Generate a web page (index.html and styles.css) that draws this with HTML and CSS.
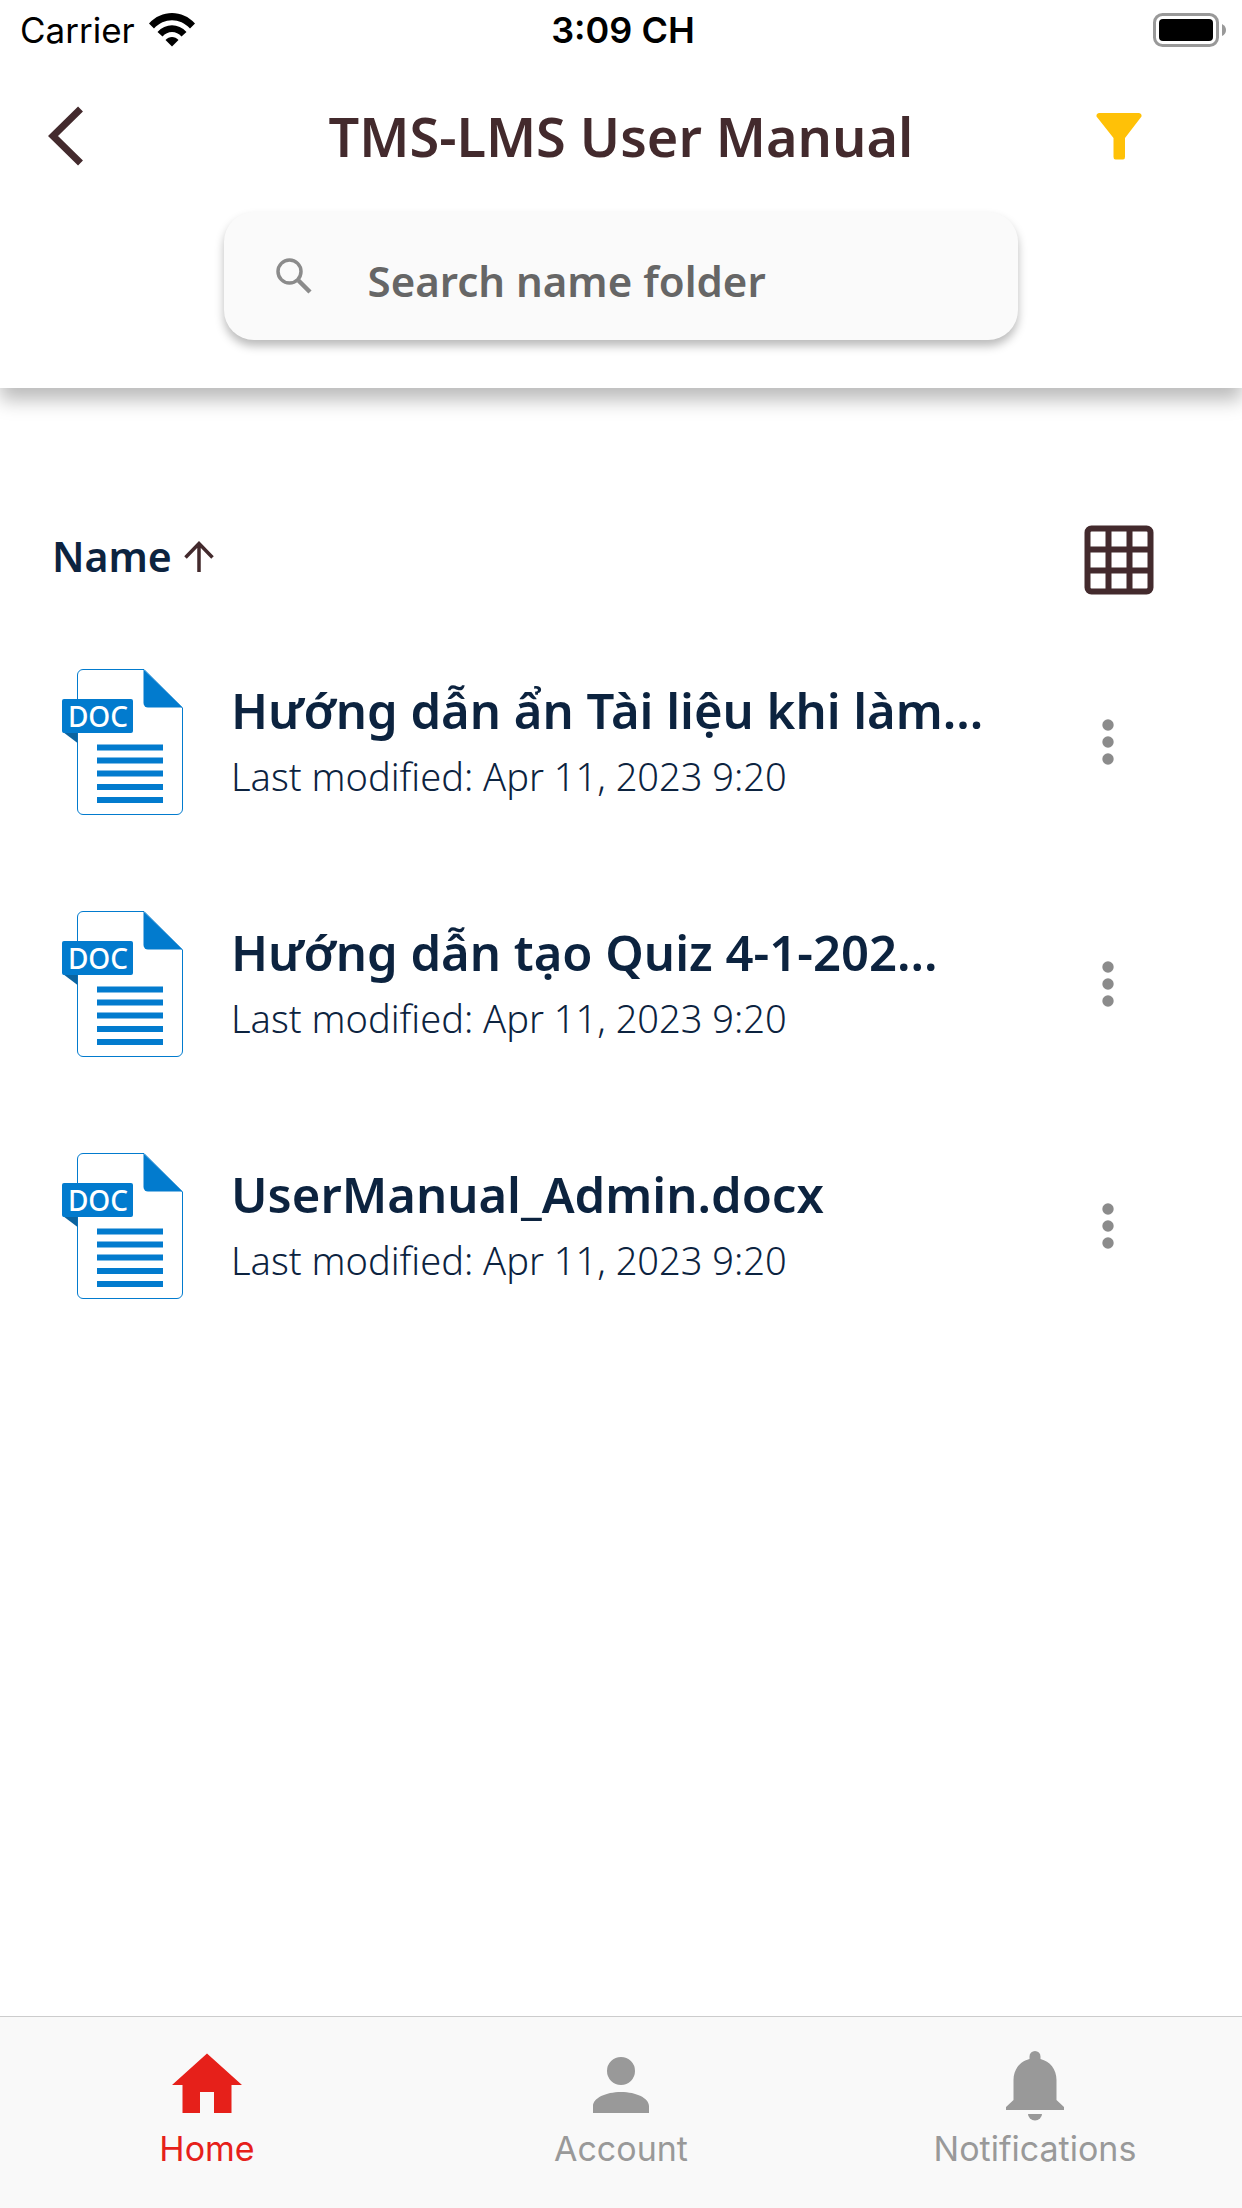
FILE: index.html
```html
<!DOCTYPE html>
<html lang="vi">
  <head>
    <meta charset="UTF-8" />
    <meta name="viewport" content="width=device-width, initial-scale=1.0" />
    <title>TMS-LMS User Manual</title>
    <link rel="stylesheet" href="styles.css">
  </head>
  <body>
    <div class="screen">
      <header class="header">
        <div class="status-bar">
          <div class="carrier">
            <span>Carrier</span>
            <svg width="46" height="34" viewBox="0 0 46 34">
              <path d="M0 10.500C12.500-3.500 33.500-3.500 46 10.500L41 15.500C31 4.500 15 4.500 5 15.500Z" />
              <path d="M8.500 19C16.500 10 29.500 10 37.500 19L32.500 23.500C27.500 17.500 18.500 17.500 13.500 23.500Z" />
              <path d="M16.500 27C20 23 26 23 29.500 27L23 33.500Z" />
            </svg>
          </div>
          <span class="time">3:09 CH</span>
          <svg class="battery" width="73" height="34" viewBox="0 0 73 34">
            <rect x="1.500" y="1.500" width="63" height="31" rx="8" fill="none" stroke="#999" stroke-width="3" />
            <rect x="6" y="6" width="54" height="22" rx="4" />
            <path d="M69 11q4 2 4 6t-4 6Z" fill="#999" />
          </svg>
        </div>

        <div class="title-bar">
          <button class="back" aria-label="Back">
            <svg width="36" height="60" viewBox="0 0 36 60">
              <path d="M32.500 3 5 30 32.500 57" fill="none" stroke="#432a2d" stroke-width="7" />
            </svg>
          </button>
          <h1>TMS-LMS User Manual</h1>
          <button class="filter" aria-label="Filter">
            <svg width="46" height="47" viewBox="0 0 46 47">
              <path d="M3 0H43q3 .500 2.500 3.500L29 25V44q0 2.500-2 2.500H19.500q-2 0-2-2.500V25L.500 3.500Q0 .500 3 0Z" fill="#ffc107" />
            </svg>
          </button>
        </div>

        <label class="search">
          <svg width="36" height="36" viewBox="0 0 36 36" fill="none" stroke="#8b8b8b">
            <circle cx="13.500" cy="13.500" r="11.500" stroke-width="3.500" />
            <path d="M22.500 22.500 34 34" stroke-width="4.500" />
          </svg>
          <input type="text" placeholder="Search name folder" aria-label="Search name folder" />
        </label>
      </header>

      <main class="content">
        <div class="toolbar">
          <button class="sort">
            Name
            <svg width="30" height="31" viewBox="0 0 30 31">
              <path d="M15 31V3M1.500 16.500 15 2.500 28.500 16.500" fill="none" stroke="#432a2d" stroke-width="3.500" />
            </svg>
          </button>
          <button aria-label="Grid view">
            <svg width="70" height="70" viewBox="0 0 70 70" fill="none" stroke="#432a2d" stroke-width="6">
              <rect x="3.500" y="3.500" width="63" height="63" rx="4" />
              <path d="M24.500 3V67M45.500 3V67M3 24.500H67M3 45.500H67" />
            </svg>
          </button>
        </div>

        <ul class="files">
          <li class="file">
            <svg class="file-icon" viewBox="0 0 124 148">
              <path d="M22 1.500H83L121.500 40V141a5.500 5.500 0 0 1-5.500 5.500H22a5.500 5.500 0 0 1-5.500-5.500V7A5.500 5.500 0 0 1 22 1.500Z" fill="#fff" stroke="#027bce" />
              <path d="M82.500 1.500 121.500 39.500H87a4.500 4.500 0 0 1-4.500-4.500Z" fill="#027bce" />
              <path d="M2 64 16.500 75V64Z" fill="#0b639f" />
              <rect x="1" y="31" width="71" height="34" rx="2" fill="#027bce" />
              <text x="37" y="59" text-anchor="middle" class="doc-text">DOC</text>
              <path d="M36 79.500h66M36 92.500h66M36 105.500h66M36 119h66M36 132h66" stroke="#027bce" stroke-width="6" />
            </svg>
            <div class="file-info">
              <h2>Hướng dẫn ẩn Tài liệu khi làm...</h2>
              <p>Last modified: Apr 11, 2023 9:20</p>
            </div>
            <button class="more" aria-label="More">
              <svg viewBox="0 0 12 48">
                <circle cx="6" cy="7" r="5.700" />
                <circle cx="6" cy="24" r="5.700" />
                <circle cx="6" cy="41" r="5.700" />
              </svg>
            </button>
          </li>
          <li class="file">
            <svg class="file-icon" viewBox="0 0 124 148">
              <path d="M22 1.500H83L121.500 40V141a5.500 5.500 0 0 1-5.500 5.500H22a5.500 5.500 0 0 1-5.500-5.500V7A5.500 5.500 0 0 1 22 1.500Z" fill="#fff" stroke="#027bce" />
              <path d="M82.500 1.500 121.500 39.500H87a4.500 4.500 0 0 1-4.500-4.500Z" fill="#027bce" />
              <path d="M2 64 16.500 75V64Z" fill="#0b639f" />
              <rect x="1" y="31" width="71" height="34" rx="2" fill="#027bce" />
              <text x="37" y="59" text-anchor="middle" class="doc-text">DOC</text>
              <path d="M36 79.500h66M36 92.500h66M36 105.500h66M36 119h66M36 132h66" stroke="#027bce" stroke-width="6" />
            </svg>
            <div class="file-info">
              <h2>Hướng dẫn tạo Quiz 4-1-202...</h2>
              <p>Last modified: Apr 11, 2023 9:20</p>
            </div>
            <button class="more" aria-label="More">
              <svg viewBox="0 0 12 48">
                <circle cx="6" cy="7" r="5.700" />
                <circle cx="6" cy="24" r="5.700" />
                <circle cx="6" cy="41" r="5.700" />
              </svg>
            </button>
          </li>
          <li class="file">
            <svg class="file-icon" viewBox="0 0 124 148">
              <path d="M22 1.500H83L121.500 40V141a5.500 5.500 0 0 1-5.500 5.500H22a5.500 5.500 0 0 1-5.500-5.500V7A5.500 5.500 0 0 1 22 1.500Z" fill="#fff" stroke="#027bce" />
              <path d="M82.500 1.500 121.500 39.500H87a4.500 4.500 0 0 1-4.500-4.500Z" fill="#027bce" />
              <path d="M2 64 16.500 75V64Z" fill="#0b639f" />
              <rect x="1" y="31" width="71" height="34" rx="2" fill="#027bce" />
              <text x="37" y="59" text-anchor="middle" class="doc-text">DOC</text>
              <path d="M36 79.500h66M36 92.500h66M36 105.500h66M36 119h66M36 132h66" stroke="#027bce" stroke-width="6" />
            </svg>
            <div class="file-info">
              <h2>UserManual_Admin.docx</h2>
              <p>Last modified: Apr 11, 2023 9:20</p>
            </div>
            <button class="more" aria-label="More">
              <svg viewBox="0 0 12 48">
                <circle cx="6" cy="7" r="5.700" />
                <circle cx="6" cy="24" r="5.700" />
                <circle cx="6" cy="41" r="5.700" />
              </svg>
            </button>
          </li>
        </ul>
      </main>

      <nav class="tabs">
        <a href="#home" class="tab active">
          <svg viewBox="0 0 24 24"><path d="M10 20V14H14V20H19V12H22L12 3 2 12H5V20Z" /></svg>
          Home
        </a>
        <a href="#account" class="tab">
          <svg viewBox="0 0 24 24"><path d="M12 4a4 4 0 1 1 0 8 4 4 0 0 1 0-8M12 14c4.420 0 8 1.790 8 4v2H4v-2c0-2.210 3.580-4 8-4" /></svg>
          Account
        </a>
        <a href="#notifications" class="tab">
          <svg viewBox="0 0 84 84">
            <path d="M36.500 16V13.500a5.500 5.500 0 0 1 11 0V16C57 18.500 63.500 26 63.500 37V57L71 64V67H13V64L20.500 57V37C20.500 26 27 18.500 36.500 16Z" />
            <path d="M35 71H49a7 6.500 0 0 1-14 0Z" />
          </svg>
          Notifications
        </a>
      </nav>
    </div>
  </body>
</html>
```
FILE: styles.css
```css
* {
  box-sizing: border-box;
}

body {
  margin: 0;
  background: #fff;
  color: #0c233f;
  font-family: "Noto Sans", "Open Sans", sans-serif;
}

h1,
h2,
p,
ul {
  margin: 0;
  padding: 0;
}

button {
  display: flex;
  align-items: center;
  padding: 0;
  border: none;
  background: none;
  font: inherit;
  color: inherit;
  cursor: pointer;
}

svg {
  display: block;
  flex: none;
}

.screen {
  display: flex;
  flex-direction: column;
  min-height: 100vh;
}

.header {
  padding-bottom: 48px;
  background: #fff;
  box-shadow: 0 12px 18px rgba(0, 0, 0, 0.27);
}

.status-bar {
  display: grid;
  grid-template-columns: 1fr auto 1fr;
  align-items: center;
  height: 60px;
  padding: 0 16px 0 20px;
  color: #000;
  font-family: Inter, sans-serif;
  font-size: 35px;
}

.carrier {
  display: flex;
  align-items: center;
  gap: 14px;
}

.time {
  font-size: 36px;
  font-weight: 600;
}

.battery {
  justify-self: end;
}

.title-bar {
  display: grid;
  grid-template-columns: 1fr auto 1fr;
  align-items: center;
  height: 152px;
  padding: 0 48px;
  color: #432a2d;
}

.title-bar h1 {
  font-size: 54px;
  font-weight: 600;
}

.filter {
  justify-self: end;
  margin-right: 52px;
}

.search {
  display: flex;
  align-items: center;
  gap: 56px;
  width: 64%;
  height: 128px;
  margin: 0 auto;
  padding: 0 52px;
  border-radius: 30px;
  background: #fafafa;
  box-shadow: 0 6px 10px rgba(0, 0, 0, 0.27);
}

.search input {
  flex: 1;
  min-width: 0;
  padding: 8px 0 0;
  border: none;
  outline: none;
  background: none;
  font: 600 42px "Noto Sans", sans-serif;
}

.search input::placeholder {
  color: #666;
  opacity: 1;
}

.content {
  flex: 1;
  padding-top: 137px;
}

.toolbar {
  display: flex;
  align-items: center;
  justify-content: space-between;
  height: 70px;
  padding: 0 88px 0 52px;
}

.sort {
  gap: 12px;
  padding-bottom: 8px;
  font-size: 41px;
  font-weight: 600;
}

.files {
  padding-top: 26px;
  list-style: none;
}

.file {
  display: flex;
  align-items: center;
  height: 242px;
  padding: 0 128px 0 61px;
}

.file-icon {
  width: 124px;
  height: 148px;
}

.doc-text {
  fill: #fff;
  font-size: 28px;
  font-weight: 500;
}

.file-info {
  flex: 1;
  min-width: 0;
  padding: 0 0 2px 46px;
}

.file-info h2 {
  font-size: 49px;
  font-weight: 600;
  line-height: 70px;
  white-space: nowrap;
}

.file-info p {
  font-size: 38px;
  font-weight: 300;
  line-height: 62px;
}

.more svg {
  width: 12px;
  height: 48px;
  fill: #8b8b8b;
}

.tabs {
  display: flex;
  height: 192px;
  border-top: 1px solid #ccc;
  background: #f9f9f9;
}

.tab {
  display: flex;
  flex: 1;
  flex-direction: column;
  align-items: center;
  padding-top: 26px;
  color: #999;
  font-family: Inter, sans-serif;
  font-size: 34px;
  line-height: 44px;
  text-decoration: none;
}

.tab svg {
  width: 84px;
  height: 84px;
  fill: currentColor;
}

.tab.active {
  color: #e6201a;
}
```
